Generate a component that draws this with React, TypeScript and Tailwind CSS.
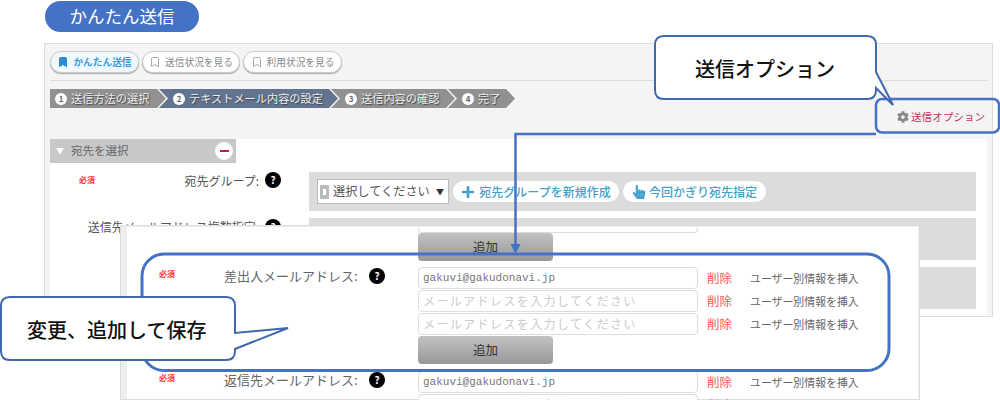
import React from 'react';
import { Bookmark } from 'lucide-react';
import { FaCog, FaHandPointer, FaPlus } from 'react-icons/fa';

const Help = () => (
  <span className="flex h-4 w-4 shrink-0 items-center justify-center rounded-full bg-black text-[10px] font-bold leading-none text-white">?</span>
);

const Required = () => <span className="whitespace-nowrap text-[8px] font-bold leading-none text-[#f33]">必須</span>;

const tabs = [
  { label: 'かんたん送信', active: true, width: 'w-[89px]' },
  { label: '送信状況を見る', active: false, width: 'w-[98px]' },
  { label: '利用状況を見る', active: false, width: 'w-[99px]' },
];

const steps = [
  { n: 1, label: '送信方法の選択', width: 'w-[116px]', bg: 'bg-[#919191]', first: true },
  { n: 2, label: 'テキストメール内容の設定', width: 'w-[179px]', bg: 'bg-[#62748f]', first: false },
  { n: 3, label: '送信内容の確認', width: 'w-[124px]', bg: 'bg-[#919191]', first: false },
  { n: 4, label: '完了', width: 'w-[67px]', bg: 'bg-[#919191]', first: false },
];

const EmailRow = ({ value }: { value?: string }) => (
  <div className="flex h-[22px] items-center whitespace-nowrap">
    <div className="flex h-[22px] w-[280px] shrink-0 items-center rounded border border-[#ddd] bg-white px-1">
      {value ? (
        <span className="font-['Liberation_Mono',monospace] text-[11px] text-[#777]">{value}</span>
      ) : (
        <span className="text-[12px] tracking-[1.4px] text-[#ccc]">メールアドレスを入力してください</span>
      )}
    </div>
    <span className="ml-[9px] text-[12.5px] text-[#f55]">削除</span>
    <span className="ml-[18px] text-[10.9px] text-[#666]">ユーザー別情報を挿入</span>
  </div>
);

const AddButton = () => (
  <div className="flex h-[28px] w-[135px] items-center justify-center rounded bg-gradient-to-b from-[#c2c2c2] to-[#989898] text-[12.5px] text-[#333]">
    追加
  </div>
);

const Annotations = () => (
  <svg className="absolute left-0 top-0 h-[400px] w-[1000px]" viewBox="0 0 1000 400" fill="none">
    <rect x="142" y="254" width="747" height="116.5" rx="22" stroke="#4472c4" strokeWidth="3" />
    <path d="M876 134H515.5V246" stroke="#4472c4" strokeWidth="2.5" />
    <path d="M510.5 244H520.5L515.5 254Z" fill="#4472c4" />
    <rect x="876" y="99" width="123" height="33.5" rx="6" stroke="#4472c4" strokeWidth="2.5" />
    <path
      d="M664 36H867Q876 36 876 45V72L893 105L876 88V90Q876 99 867 99H664Q655 99 655 90V45Q655 36 664 36Z"
      fill="#fff"
      stroke="#3f68ad"
      strokeWidth="2"
    />
    <path
      d="M10 297H226Q235 297 235 306V333L288 328L235 349V351Q235 360 226 360H10Q1 360 1 351V306Q1 297 10 297Z"
      fill="#fff"
      stroke="#3f68ad"
      strokeWidth="2"
    />
  </svg>
);

export default function App() {
  return (
    <div className="relative h-[400px] w-[1000px] overflow-hidden bg-white font-['Noto_Sans_CJK_JP','Noto_Sans',sans-serif]">
      <div className="ml-[45px] mt-px flex h-[31px] w-[154px] items-center justify-center rounded-full bg-[#4472c4] text-[17.5px] text-white">
        かんたん送信
      </div>

      {/* back window */}
      <div className="ml-[44px] mt-[11px] h-[274px] w-[949px] border border-[#ddd] bg-[#f4f4f4] pl-[5px] pr-[4px] pt-[7px]">
        <div className="flex h-[30px] gap-[3px] border-b border-[#ddd] pb-[7px]">
          {tabs.map((t) => (
            <div
              key={t.label}
              className={`flex h-[22px] items-center justify-center gap-[4px] rounded-full border border-[#ccc] shadow-[0_1px_1px_#aaa] ${t.width} ${t.active ? 'bg-[#eef8ff] text-[#3c9ad8]' : 'bg-white text-[#888]'}`}
            >
              {t.active ? (
                <Bookmark size={12} fill="#2e8ad0" stroke="#2e8ad0" />
              ) : (
                <Bookmark size={12} stroke="#aaa" />
              )}
              <span className={`text-[9.7px] ${t.active ? 'font-bold' : ''}`}>{t.label}</span>
            </div>
          ))}
        </div>

        <div className="mt-2 flex h-[19px]">
          {steps.map((s) => (
            <div
              key={s.n}
              className={`flex h-[19px] items-center gap-[4px] ${s.width} ${s.bg} ${s.first ? 'pl-[5px] [clip-path:polygon(0_0,calc(100%-9px)_0,100%_50%,calc(100%-9px)_100%,0_100%)]' : '-ml-[7px] pl-[14px] [clip-path:polygon(0_0,calc(100%-9px)_0,100%_50%,calc(100%-9px)_100%,0_100%,9px_50%)]'}`}
            >
              <span className="flex h-3 w-3 shrink-0 items-center justify-center rounded-full bg-white text-[8px] font-bold leading-none text-[#666]">{s.n}</span>
              <span className="whitespace-nowrap text-[11.2px] text-[#eee] [text-shadow:1px_1px_1px_#444]">{s.label}</span>
            </div>
          ))}
        </div>

        <div className="mt-[31px] h-[177px] w-[937px] bg-white">
          <div className="flex h-[24px] w-[186px] items-center bg-[#c8c8c8] pl-[6px] pr-[3px]">
            <span className="text-[8px] text-white">▼</span>
            <span className="ml-[7px] text-[11.5px] text-[#666]">宛先を選択</span>
            <span className="ml-auto flex h-[18px] w-[18px] items-center justify-center rounded-full bg-white">
              <span className="h-[2px] w-[9px] bg-[#c9174a]" />
            </span>
          </div>

          <div className="mt-[9px] flex flex-col gap-[7px]">
            <div className="flex h-[39px]">
              <div className="flex w-[259px] items-start">
                <span className="ml-[29px] mt-[4px] flex"><Required /></span>
                <span className="ml-auto text-[12px] text-[#555]">宛先グループ:</span>
                <span className="ml-[6px] mr-[28px]"><Help /></span>
              </div>
              <div className="flex w-[667px] items-center gap-1 bg-[#dcdcdc] pl-2">
                <div className="flex h-[25px] w-[132px] items-center border border-[#bbb] bg-white px-[2px]">
                  <span className="flex h-[14px] w-[9px] items-center justify-center rounded-[1px] bg-[#bbb]"><span className="h-[6px] w-[3px] bg-white" /></span>
                  <span className="ml-[4px] text-[12.2px] text-[#555]">選択してください</span>
                  <span className="ml-auto mr-[2px] text-[8px] text-[#333]">▼</span>
                </div>
                <div className="flex h-[21px] w-[166px] items-center justify-center gap-1 rounded-full bg-white text-[#44a0cc]">
                  <FaPlus size={14} />
                  <span className="whitespace-nowrap text-[12px] font-medium">宛先グループを新規作成</span>
                </div>
                <div className="flex h-[21px] w-[143px] items-center justify-center gap-[3px] rounded-full bg-white text-[#44a0cc]">
                  <FaHandPointer size={14} />
                  <span className="whitespace-nowrap text-[12px] font-medium">今回かぎり宛先指定</span>
                </div>
              </div>
            </div>

            <div className="flex h-[42px]">
              <div className="flex w-[259px] items-start">
                <span className="ml-auto whitespace-nowrap text-[12px] text-[#555]">送信先メールアドレス複数指定:</span>
                <span className="ml-[6px] mr-[28px] mt-[1px]"><Help /></span>
              </div>
              <div className="w-[667px] bg-[#dcdcdc]" />
            </div>

            <div className="ml-[259px] h-[42px] w-[667px] bg-[#dcdcdc]" />
          </div>
        </div>
      </div>

      {/* front window */}
      <div className="absolute left-[120px] top-[225px] h-[175px] w-[800px] border border-[#ddd] bg-[#eee] pl-[6px] pr-[1px] pt-[1px]">
        <div className="h-full bg-white pl-[291px]">
          <div className="h-[6px] w-[280px] rounded-b border border-t-0 border-[#ddd]" />
          <AddButton />
        </div>
      </div>

      <div className="absolute left-[158px] top-[267px] flex w-[760px] flex-col">
        <div className="flex">
          <div className="flex w-[260px] shrink-0 items-start">
            <span className="ml-px mt-[3px] flex"><Required /></span>
            <span className="ml-[49px] whitespace-nowrap text-[13px] leading-[18px] text-[#666]">差出人メールアドレス:</span>
            <span className="ml-auto mr-[33px] mt-px"><Help /></span>
          </div>
          <div className="flex flex-col gap-px">
            <EmailRow value="gakuvi@gakudonavi.jp" />
            <EmailRow />
            <EmailRow />
            <AddButton />
          </div>
        </div>
        <div className="mt-[7px] flex">
          <div className="flex w-[260px] shrink-0 items-start">
            <span className="ml-px mt-[3px] flex"><Required /></span>
            <span className="ml-[49px] whitespace-nowrap text-[13px] leading-[18px] text-[#666]">返信先メールアドレス:</span>
            <span className="ml-auto mr-[33px] mt-px"><Help /></span>
          </div>
          <div className="flex flex-col gap-px">
            <EmailRow value="gakuvi@gakudonavi.jp" />
            <EmailRow />
          </div>
        </div>
      </div>

      <Annotations />

      <div className="absolute left-[897px] top-[109px] flex items-center gap-[2px]">
        <FaCog size={12} className="text-[#888]" />
        <span className="text-[10.6px] text-[#c0355f]">送信オプション</span>
      </div>
      <span className="absolute left-[695px] top-[54px] text-[20px] font-medium leading-[30px] text-[#111]">送信オプション</span>
      <span className="absolute left-[27px] top-[315px] text-[20px] font-medium leading-[30px] text-[#111]">変更、追加して保存</span>
    </div>
  );
}
